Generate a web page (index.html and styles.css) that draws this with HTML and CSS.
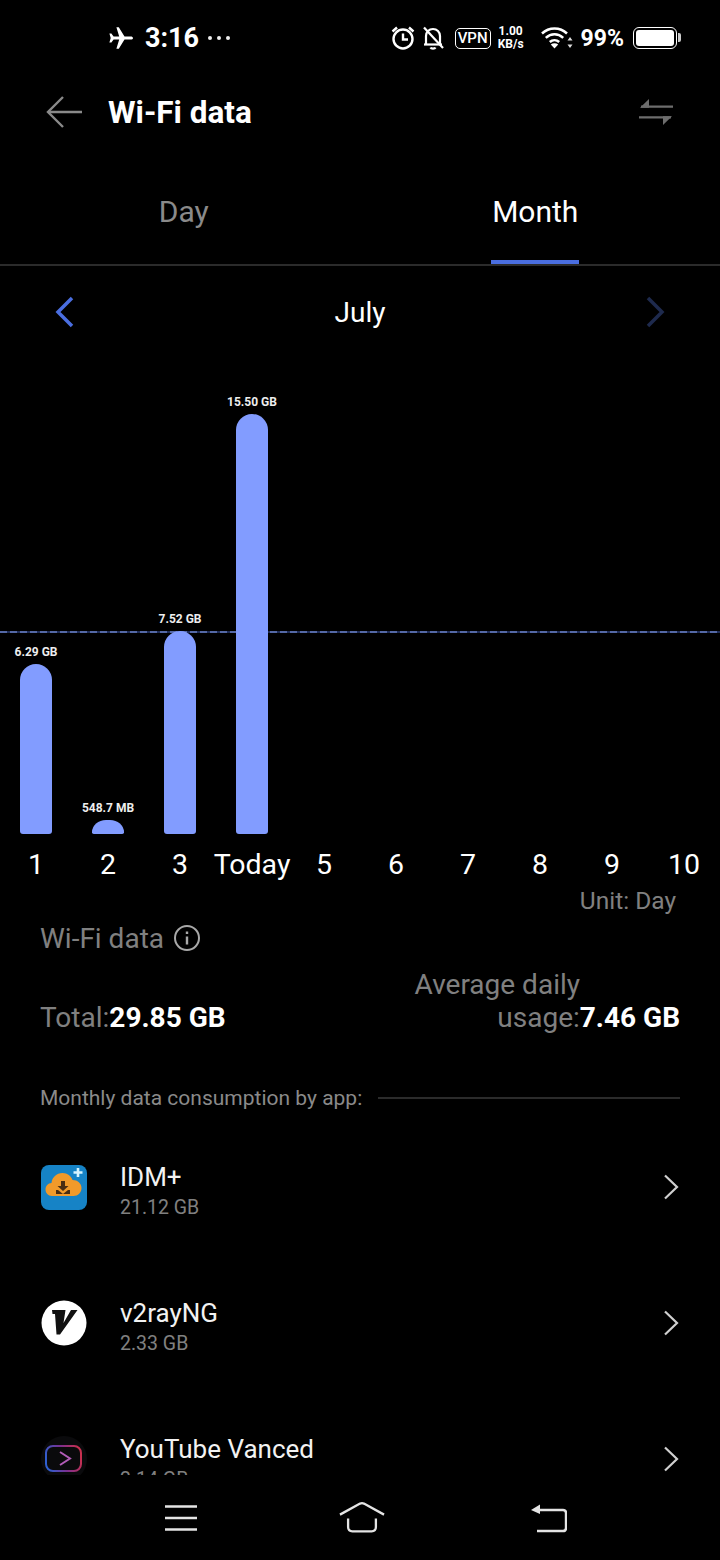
FILE: index.html
```html
<!DOCTYPE html>
<html lang="en">
<head>
    <meta charset="UTF-8">
    <meta name="viewport" content="width=device-width, initial-scale=1.0">
    <title>Wi-Fi data</title>
    <link rel="stylesheet" href="styles.css">
</head>
<body>
    <div class="screen">
        <div class="status-bar">
            <div class="status-left">
                <svg width="26" height="24" viewBox="0 0 26 24"><path d="M25 12c0-1-1-1.600-2.400-1.600H16.500L10.800 1.200H8.400l2.800 9.200H5.600L3.400 7.600H1.400l1.300 4.400-1.300 4.400h2l2.200-2.800h5.600l-2.800 9.200h2.400l5.700-9.200h6.100C24 13.600 25 13 25 12z" fill="#fff"/></svg>
                <span class="clock">3:16</span>
                <span class="dots"><i></i><i></i><i></i></span>
            </div>
            <div class="status-right">
                <svg width="26" height="26" viewBox="0 0 26 26" fill="none" stroke="#fff" stroke-width="2.4"><circle cx="13" cy="14" r="9.5"/><path d="M13 8.500V14.500H18"/><path d="M2.500 6.500 7 2.500M23.500 6.500 19 2.500"/></svg>
                <svg class="ic-bell" width="24" height="26" viewBox="0 0 24 26" fill="none" stroke="#fff" stroke-width="2.2"><path d="M5 19V11c0-4 3-7 7-7s7 3 7 7v8"/><path d="M3 19.500H21"/><path d="M9.500 22.500c.6 1.400 4.400 1.400 5 0"/><path d="M3 2.500 22 23"/></svg>
                <span class="vpn">VPN</span>
                <span class="speed"><b>1.00</b><b>KB/s</b></span>
                <svg class="ic-wifi" width="32" height="24" viewBox="0 0 32 24"><path d="M1 7.500C8 .8 19 .8 26 7.500M4.800 11.800C10 7 17 7 22.200 11.800M8.800 16C11.500 13.500 15.500 13.500 18.200 16" fill="none" stroke="#fff" stroke-width="2.5"/><path d="M13.500 22.500 9.800 18.500C12 16.800 15 16.800 17.200 18.500z" fill="#fff"/><path d="M29 11l2.500 3.500h-5zM29 22l-2.500-3.500h5z" fill="#ddd"/></svg>
                <span class="battery-pct">99%</span>
                <span class="battery"><span class="battery-fill"></span></span>
            </div>
        </div>

        <div class="toolbar">
            <svg width="36" height="32" viewBox="0 0 36 32" fill="none" stroke="#8a8a8a" stroke-width="2.4"><path d="M36 16H2"/><path d="M17 1 2 16 17 31"/></svg>
            <h1>Wi-Fi data</h1>
            <svg width="34" height="28" viewBox="0 0 34 28" fill="#6d6d6d"><path d="M2 7.400H34V9.800H2zM0 18.200H32V20.600H0z"/><path d="M1 9.800 10 1V9.800zM33 18.200 24 27V18.200z"/></svg>
        </div>

        <div class="tabs">
            <div class="tab">Day</div>
            <div class="tab active"><span>Month</span></div>
        </div>

        <div class="month-nav">
            <svg width="20" height="32" viewBox="0 0 20 32" fill="none" stroke="#4a6ee0" stroke-width="3.5"><path d="M17 2 3 16 17 30"/></svg>
            <span>July</span>
            <svg width="20" height="32" viewBox="0 0 20 32" fill="none" stroke="#1e2a4d" stroke-width="3.5"><path d="M3 2 17 16 3 30"/></svg>
        </div>

        <div class="chart">
            <div class="avg-line"></div>
            <div class="bar-col"><span class="bar-value">6.29 GB</span><div class="bar" style="height:170px"></div></div>
            <div class="bar-col"><span class="bar-value">548.7 MB</span><div class="bar bar-small" style="height:14px"></div></div>
            <div class="bar-col"><span class="bar-value">7.52 GB</span><div class="bar" style="height:203px"></div></div>
            <div class="bar-col"><span class="bar-value">15.50 GB</span><div class="bar" style="height:420px"></div></div>
            <div class="bar-col"></div>
            <div class="bar-col"></div>
            <div class="bar-col"></div>
            <div class="bar-col"></div>
            <div class="bar-col"></div>
            <div class="bar-col"></div>
        </div>

        <div class="axis">
            <span>1</span><span>2</span><span>3</span><span>Today</span><span>5</span>
            <span>6</span><span>7</span><span>8</span><span>9</span><span>10</span>
        </div>
        <div class="unit">Unit: Day</div>

        <div class="summary-title">
            <span>Wi-Fi data</span>
            <svg width="28" height="28" viewBox="0 0 28 28" fill="none" stroke="#a8a8a8" stroke-width="2"><circle cx="14" cy="14" r="12"/><path d="M14 12.500V20.500M14 7.500V10" stroke-width="2.4"/></svg>
        </div>

        <div class="summary">
            <div class="total">Total:<b>29.85 GB</b></div>
            <div class="average">
                <div class="average-label">Average daily</div>
                usage:<b>7.46 GB</b>
            </div>
        </div>

        <div class="section-head">
            <span>Monthly data consumption by app:</span>
            <div class="section-rule"></div>
        </div>

        <div class="app-list">
            <div class="app-row">
                <svg class="app-icon" width="46" height="46" viewBox="0 0 46 46">
                    <rect y="1" width="46" height="45" rx="8" fill="#1683c6"/>
                    <path d="M11 32c-4 0-6.500-3-6.500-6.500S7 19 10.500 19c.5-5.500 5-10 11-10 5 0 8.500 3 10 7 5 0 9 3.500 9 8s-3.500 8-8 8z" fill="#f19a2a"/>
                    <path d="M20 17h4v5h3.500L22 27l-5.500-5H20zM15 26h2l5 4 5-4h2v4H15z" fill="#4a2d12"/>
                    <path d="M37 4v9M32.500 8.500h9" stroke="#d6f4ff" stroke-width="2.6"/>
                </svg>
                <div class="app-text"><div class="app-name">IDM+</div><div class="app-size">21.12 GB</div></div>
                <svg width="16" height="26" viewBox="0 0 16 26" fill="none" stroke="#d0d0d0" stroke-width="2.2"><path d="M2 1.500 14 13 2 24.500"/></svg>
            </div>
            <div class="app-row">
                <svg class="app-icon" width="46" height="46" viewBox="0 0 46 46">
                    <circle cx="23" cy="23" r="22.5" fill="#fff"/>
                    <path d="M11 10H24.500L22.500 23 30 10H36.500L19 34.500H15.500L14 14H11.500z" fill="#111"/>
                </svg>
                <div class="app-text"><div class="app-name">v2rayNG</div><div class="app-size">2.33 GB</div></div>
                <svg width="16" height="26" viewBox="0 0 16 26" fill="none" stroke="#d0d0d0" stroke-width="2.2"><path d="M2 1.500 14 13 2 24.500"/></svg>
            </div>
            <div class="app-row">
                <svg class="app-icon" width="46" height="46" viewBox="0 0 46 46">
                    <defs>
                        <linearGradient id="ytEdge" x1="0" y1="0.6" x2="1" y2="0.4">
                            <stop offset="0" stop-color="#2f5fd0"/>
                            <stop offset="0.5" stop-color="#7a2f90"/>
                            <stop offset="1" stop-color="#c8304f"/>
                        </linearGradient>
                    </defs>
                    <circle cx="23" cy="23" r="23" fill="#0a0a0c"/>
                    <rect x="5" y="10" width="35" height="25" rx="7" fill="none" stroke="url(#ytEdge)" stroke-width="2"/>
                    <path d="M19 16 29 22.500 19 29" fill="none" stroke="#b25cb8" stroke-width="2"/>
                </svg>
                <div class="app-text"><div class="app-name">YouTube Vanced</div><div class="app-size">2.14 GB</div></div>
                <svg width="16" height="26" viewBox="0 0 16 26" fill="none" stroke="#d0d0d0" stroke-width="2.2"><path d="M2 1.500 14 13 2 24.500"/></svg>
            </div>
        </div>

        <div class="nav-bar">
            <svg width="34" height="28" viewBox="0 0 34 28" stroke="#e4e4e4" stroke-width="2.4" fill="none"><path d="M1 2.500H33M1 14H33M1 25.500H33"/></svg>
            <svg class="nav-home" width="46" height="31" viewBox="0 0 48 32" stroke="#e4e4e4" stroke-width="2.4" fill="none"><path d="M1 13 22 1.500C23.500.8 24.500.8 26 1.500L47 13"/><path d="M9.500 17V26C9.500 29 11 30.500 14 30.500H34C37 30.500 38.500 29 38.500 26V17"/></svg>
            <svg width="36" height="30" viewBox="0 0 36 30" fill="none"><path d="M5 7H32C34 7 35 8 35 10V25C35 27 34 28 32 28H6" stroke="#e4e4e4" stroke-width="2.4"/><path d="M0 7 9 1.500V11z" fill="#e4e4e4"/></svg>
        </div>
    </div>
</body>
</html>
```

FILE: styles.css
```css
* {
    margin: 0;
    padding: 0;
    box-sizing: border-box;
}

body {
    background: #000;
    color: #fff;
    font-family: Roboto, 'Noto Sans', sans-serif;
}

.screen {
    display: flex;
    flex-direction: column;
    width: 720px;
    height: 1560px;
    overflow: hidden;
}

/* status bar */
.status-bar {
    display: flex;
    justify-content: space-between;
    align-items: center;
    height: 76px;
    flex: none;
    padding: 0 43px 0 108px;
}

.status-left,
.status-right {
    display: flex;
    align-items: center;
}

.clock {
    margin-left: 11px;
    font-size: 27px;
    font-weight: 700;
}

.dots {
    display: flex;
    gap: 5px;
    margin-left: 9px;
}

.dots i {
    width: 4px;
    height: 4px;
    border-radius: 50%;
    background: #eee;
}

.ic-bell {
    margin-left: 5px;
}

.vpn {
    width: 36px;
    height: 21px;
    margin-left: 10px;
    border: 1.5px solid #fff;
    border-radius: 5px;
    font-size: 15px;
    font-weight: 500;
    line-height: 18px;
    text-align: center;
}

.speed {
    display: flex;
    flex-direction: column;
    align-items: center;
    width: 28px;
    margin-left: 6px;
    font-size: 12px;
    line-height: 13px;
}

.ic-wifi {
    margin-left: 16px;
}

.battery-pct {
    margin-left: 8px;
    font-size: 23px;
    font-weight: 700;
}

.battery {
    display: block;
    position: relative;
    width: 44px;
    height: 22px;
    margin-left: 9px;
    padding: 2px;
    border: 1.5px solid #fff;
    border-radius: 6px;
}

.battery::after {
    content: "";
    position: absolute;
    right: -5px;
    top: 5px;
    width: 3px;
    height: 9px;
    background: #ccc;
    border-radius: 0 2px 2px 0;
}

.battery-fill {
    display: block;
    height: 100%;
    background: #fff;
    border-radius: 3px;
}

/* title row */
.toolbar {
    display: flex;
    align-items: center;
    height: 72px;
    flex: none;
    padding: 0 47px 0 46px;
}

.toolbar h1 {
    flex: 1;
    margin-left: 26px;
    font-size: 31.5px;
    font-weight: 700;
}

/* tabs */
.tabs {
    display: flex;
    height: 118px;
    flex: none;
    padding: 43px 9px 0 8px;
    border-bottom: 2px solid #2b2b2b;
}

.tab {
    display: flex;
    flex: 1;
    justify-content: center;
    color: #8a8a8a;
    font-size: 30px;
    line-height: 42px;
}

.tab.active {
    color: #fff;
}

.tab.active span {
    height: 73px;
    padding: 0 1px;
    border-bottom: 4px solid #4a6ee0;
}

/* month switcher */
.month-nav {
    display: flex;
    justify-content: space-between;
    align-items: center;
    height: 94px;
    flex: none;
    padding: 0 55px 2px;
    font-size: 28px;
}

/* bars */
.chart {
    display: flex;
    position: relative;
    height: 474px;
    flex: none;
}

.avg-line {
    position: absolute;
    left: 0;
    right: 0;
    top: 271px;
    height: 2px;
    background: repeating-linear-gradient(90deg, #5468a6 0 7px, #1c2a55 7px 10px);
}

.bar-col {
    display: flex;
    position: relative;
    flex-direction: column;
    flex: 1;
    justify-content: flex-end;
    align-items: center;
}

.bar-value {
    margin-bottom: 5px;
    font-size: 12px;
    font-weight: 700;
    color: #eee;
    white-space: nowrap;
}

.bar {
    width: 32px;
    background: #829cff;
    border-radius: 16px 16px 3px 3px;
}

.bar-small {
    border-radius: 16px 16px 2px 2px / 14px 14px 2px 2px;
}

.axis {
    display: grid;
    grid-template-columns: repeat(10, 72px);
    height: 60px;
    flex: none;
    margin-top: 1px;
    font-size: 28.5px;
    line-height: 60px;
}

.axis span {
    display: flex;
    justify-content: center;
    white-space: nowrap;
}

.unit {
    height: 0;
    flex: none;
    margin-top: -9px;
    padding-right: 44px;
    color: #808080;
    font-size: 24.5px;
    line-height: 30px;
    text-align: right;
}

/* totals */
.summary-title {
    display: flex;
    align-items: center;
    gap: 9px;
    height: 40px;
    flex: none;
    margin-top: 32px;
    padding-left: 40px;
    color: #808080;
    font-size: 28px;
}

.summary {
    display: flex;
    justify-content: space-between;
    align-items: flex-end;
    flex: none;
    margin-top: 10px;
    padding: 0 40px;
    color: #808080;
    font-size: 28px;
    line-height: 33px;
}

.summary b {
    color: #fff;
    font-weight: 700;
}

.average {
    text-align: right;
}

.average-label {
    margin-right: 100px;
}

.section-head {
    display: flex;
    align-items: center;
    gap: 16px;
    flex: none;
    height: 30px;
    margin-top: 49px;
    padding: 0 40px;
    color: #8a8a8a;
    font-size: 21px;
}

.section-rule {
    flex: 1;
    height: 2px;
    background: #2b2b2b;
}

/* app rows */
.app-list {
    flex: 1;
    min-height: 0;
    padding-top: 6px;
    overflow: hidden;
}

.app-row {
    display: flex;
    align-items: center;
    height: 136px;
    padding: 0 41px;
}

.app-icon {
    flex: none;
}

.app-text {
    flex: 1;
    margin-left: 33px;
    padding-top: 5px;
}

.app-name {
    color: #f2f2f2;
    font-size: 26px;
    line-height: 34px;
}

.app-size {
    margin-top: 2px;
    color: #808080;
    font-size: 19.5px;
    line-height: 24px;
}

/* bottom navigation */
.nav-bar {
    display: flex;
    justify-content: space-between;
    align-items: center;
    height: 85px;
    flex: none;
    padding: 0 153px 0 164px;
    background: #000;
}

.nav-home {
    margin-right: 6px;
}
```
